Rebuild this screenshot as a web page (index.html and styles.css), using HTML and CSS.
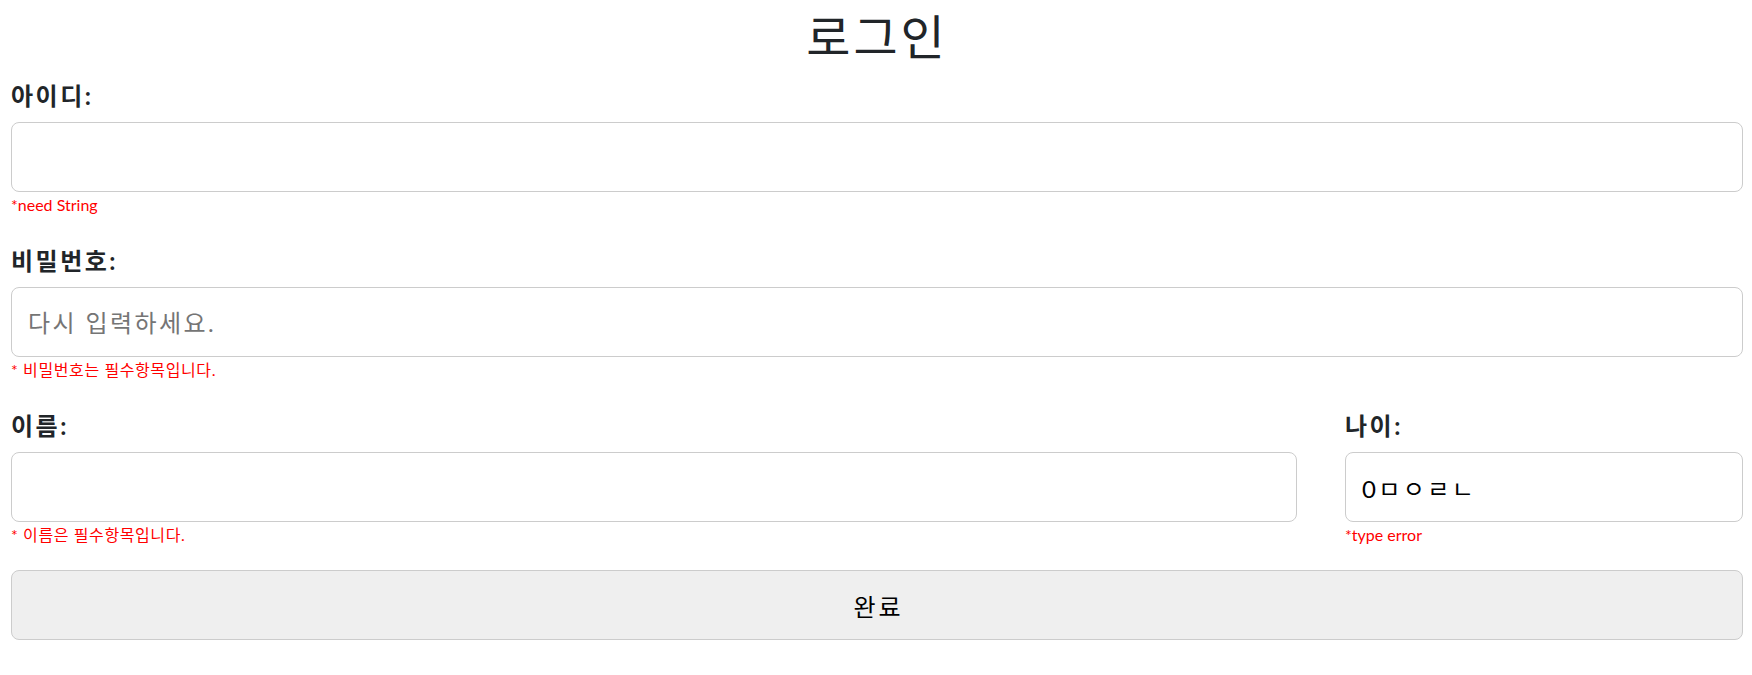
FILE: index.html
```html
<!DOCTYPE html>
<html lang="ko">
<head>
    <meta charset="UTF-8">
    <meta name="viewport" content="width=device-width, initial-scale=1.0">
    <title>로그인</title>
    <link rel="stylesheet" href="styles.css">
</head>
<body>
    <div class="container">
        <h1 class="title">로그인</h1>

        <form class="login-form">
            <div class="field">
                <label for="userId">아이디:</label>
                <input type="text" id="userId" class="input">
                <p class="error">*need String</p>
            </div>

            <div class="field">
                <label for="password">비밀번호:</label>
                <input type="password" id="password" class="input" placeholder="다시 입력하세요.">
                <p class="error ko">* 비밀번호는 필수항목입니다.</p>
            </div>

            <div class="row">
                <div class="field">
                    <label for="name">이름:</label>
                    <input type="text" id="name" class="input">
                    <p class="error ko">* 이름은 필수항목입니다.</p>
                </div>
                <div class="field">
                    <label for="age">나이:</label>
                    <input type="text" id="age" class="input" value="0ㅁㅇㄹㄴ">
                    <p class="error">*type error</p>
                </div>
            </div>

            <button type="button" class="submit">완료</button>
        </form>
    </div>
</body>
</html>
```

FILE: styles.css
```css
body {
    margin: 0;
    font-family: Lato, "Noto Sans CJK KR", sans-serif;
    color: #212529;
    background-color: #fff;
}
.container {
    padding: 0 9px 0 11px;
}
.title {
    margin: 0 0 17px;
    padding-top: 4px;
    font-family: "Noto Sans CJK KR", sans-serif;
    font-size: 48px;
    font-weight: 400;
    line-height: 60px;
    letter-spacing: 3px;
    text-align: center;
}
.field {
    margin-bottom: 30px;
}
.field label {
    display: block;
    margin-bottom: 11px;
    font-size: 24px;
    font-weight: 700;
    line-height: 30px;
    letter-spacing: 2.5px;
}
.input {
    display: block;
    width: 100%;
    height: 70px;
    box-sizing: border-box;
    padding: 0 16px;
    border: 1px solid #ccc;
    border-radius: 8px;
    font-family: Lato, "Noto Sans CJK KR", sans-serif;
    font-size: 24px;
    letter-spacing: 2.4px;
    color: #000;
}
.input::placeholder {
    color: #757575;
}
.error {
    margin: 2px 0 0;
    font-size: 16px;
    line-height: 22px;
    color: #ff0000;
}
.error.ko {
    letter-spacing: 0.6px;
}
.row {
    display: grid;
    grid-template-columns: 1fr 398px;
    gap: 48px;
    margin-bottom: 24px;
}
.row .field {
    margin-bottom: 0;
}
.submit {
    display: block;
    width: 100%;
    height: 70px;
    border: 1px solid #ccc;
    border-radius: 8px;
    background-color: #efefef;
    font-family: Lato, "Noto Sans CJK KR", sans-serif;
    font-size: 24px;
    letter-spacing: 3px;
    text-indent: 3px;
    color: #000;
    cursor: pointer;
}
```
